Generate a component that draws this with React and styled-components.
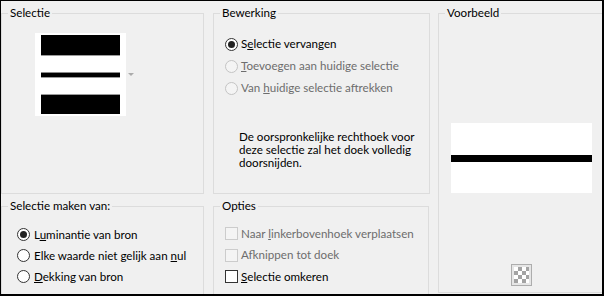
import React from 'react'
import styled, { createGlobalStyle } from 'styled-components'

const GlobalStyle = createGlobalStyle`
  html, body {
    margin: 0;
    padding: 0;
    background: #f0f0f0;
  }
  body {
    font-family: Lato, "Noto Sans", sans-serif;
    font-size: 11.6px;
    color: #000;
  }
`

const Window = styled.div`
  box-sizing: border-box;
  width: 604px;
  height: 296px;
  overflow: hidden;
  background: #f0f0f0;
  border: solid #000;
  border-width: 1px 2px 2px 1px;
  padding-top: 12px;
  display: grid;
  grid-template-columns: 203px 216px 165px;
  grid-template-rows: 181px 1fr;
  column-gap: 9px;
  row-gap: 12px;

  & > :nth-child(2) {
    margin-right: -1px;
  }
`

const Group = styled.section`
  position: relative;
  box-sizing: border-box;
  border: 1px solid #dcdcdc;
  border-bottom-width: ${p => (p.$cut ? 0 : 1)}px;
  grid-row: ${p => (p.$span ? 'span 2' : 'auto')};
  height: ${p => (p.$span ? '280px' : 'auto')};
  padding: ${p => p.$pad || '0'};
  display: flex;
  flex-direction: column;
  align-items: ${p => p.$center ? 'center' : 'stretch'};
`

const Legend = styled.span`
  position: absolute;
  top: -9px;
  left: 6px;
  padding: 0 2px;
  line-height: 16px;
  background: #f0f0f0;
  white-space: nowrap;
`

const SourceRow = styled.div`
  display: flex;
  align-items: center;
  gap: 2px;
`

const DropArrow = styled.span`
  width: 0;
  height: 0;
  border-left: 3px solid transparent;
  border-right: 3px solid transparent;
  border-top: 3px solid #ababab;
`

const OptionList = styled.div`
  display: flex;
  flex-direction: column;
`

const Option = styled.label`
  display: flex;
  align-items: center;
  gap: ${p => p.$gap || 3}px;
  height: ${p => p.$h || 22}px;
  line-height: 16px;
  white-space: nowrap;
  color: ${p => (p.$disabled ? '#6d6d6d' : '#000')};
`

const Radio = styled.span`
  box-sizing: border-box;
  flex: none;
  width: 13px;
  height: 13px;
  border-radius: 50%;
  border: 1px solid ${p => (p.$disabled ? '#c4c4c4' : '#333')};
  background: ${p => (p.$disabled ? '#f4f4f4' : '#fff')};
  display: flex;
  align-items: center;
  justify-content: center;

  &::after {
    content: '';
    width: 7px;
    height: 7px;
    border-radius: 50%;
    background: #222;
    display: ${p => (p.$checked ? 'block' : 'none')};
  }
`

const Check = styled.span`
  box-sizing: border-box;
  flex: none;
  width: 13px;
  height: 13px;
  border: 1px solid ${p => (p.$disabled ? '#cccccc' : '#333')};
  background: ${p => (p.$disabled ? '#f4f4f4' : '#fff')};
`

const Note = styled.p`
  margin: 31px 0 0 14px;
  line-height: 13px;
  white-space: nowrap;
`

const PreviewCanvas = styled.div`
  width: 141px;
  height: 70px;
  margin-top: 109px;
  margin-left: 2px;
  background: #fff;
  display: flex;
  align-items: flex-start;
`

const PreviewBar = styled.div`
  width: 100%;
  height: 7px;
  margin-top: 32px;
  background: #000;
`

const CheckerButton = styled.button`
  box-sizing: border-box;
  width: 21px;
  height: 22px;
  margin-top: 71px;
  margin-left: 2px;
  padding: 2px;
  border: 1px solid #adadad;
  background: #e6e6e6;
  display: flex;
  align-items: center;
  justify-content: center;

  &::before {
    content: '';
    width: 16px;
    height: 16px;
    background: repeating-conic-gradient(#a3a3a3 0 25%, #fff 0 50%) 0 0 / 8px 8px;
  }
`

const SourceThumb = () => (
  <svg width="91" height="83" viewBox="0 0 91 83" style={{ display: 'block' }}>
    <rect width="91" height="83" fill="#fff" />
    <rect x="6" y="2" width="79" height="20" fill="#000" />
    <rect x="6" y="22" width="79" height="1" fill="#9a9a9a" />
    <rect x="6" y="39" width="79" height="1" fill="#8a8a8a" />
    <rect x="6" y="40" width="79" height="4" fill="#000" />
    <rect x="6" y="44" width="79" height="1" fill="#9a9a9a" />
    <rect x="6" y="61" width="79" height="1" fill="#9a9a9a" />
    <rect x="6" y="62" width="79" height="19" fill="#000" />
  </svg>
)

const Item = ({ type, checked, disabled, gap, h, children }) => (
  <Option $disabled={disabled} $gap={gap} $h={h}>
    {type === 'check' ? (
      <Check $disabled={disabled} />
    ) : (
      <Radio $checked={checked} $disabled={disabled} />
    )}
    <span>{children}</span>
  </Option>
)

export default function App() {
  return (
    <>
      <GlobalStyle />
      <Window>
        <Group $pad="19px 0 0 33px">
          <Legend>Selectie</Legend>
          <SourceRow>
            <SourceThumb />
            <DropArrow />
          </SourceRow>
        </Group>

        <Group $pad="19px 0 0 11px">
          <Legend>Bewerking</Legend>
          <OptionList>
            <Item checked>S<u>e</u>lectie vervangen</Item>
            <Item disabled><u>T</u>oevoegen aan huidige selectie</Item>
            <Item disabled>Van <u>h</u>uidige selectie aftrekken</Item>
          </OptionList>
          <Note>
            De oorspronkelijke rechthoek voor
            <br />
            deze selectie zal het doek volledig
            <br />
            doorsnijden.
          </Note>
        </Group>

        <Group $span $center $pad="0 0 0 0">
          <Legend>Voorbeeld</Legend>
          <PreviewCanvas>
            <PreviewBar />
          </PreviewCanvas>
          <CheckerButton aria-label="Transparantie" />
        </Group>

        <Group $cut $pad="17px 0 0 15px">
          <Legend>Selectie maken van:</Legend>
          <OptionList>
            <Item checked gap={4} h={21}>L<u>u</u>minantie van bron</Item>
            <Item gap={4} h={21}>Elke waarde niet gelijk aan <u>n</u>ul</Item>
            <Item gap={4} h={21}><u>D</u>ekking van bron</Item>
          </OptionList>
        </Group>

        <Group $cut $pad="16px 0 0 11px">
          <Legend>Opties</Legend>
          <OptionList>
            <Item type="check" disabled h={21.5}>Naar <u>l</u>inkerbovenhoek verplaatsen</Item>
            <Item type="check" disabled h={21.5}>Af<u>k</u>nippen tot doek</Item>
            <Item type="check" h={21.5}><u>S</u>electie omkeren</Item>
          </OptionList>
        </Group>
      </Window>
    </>
  )
}
